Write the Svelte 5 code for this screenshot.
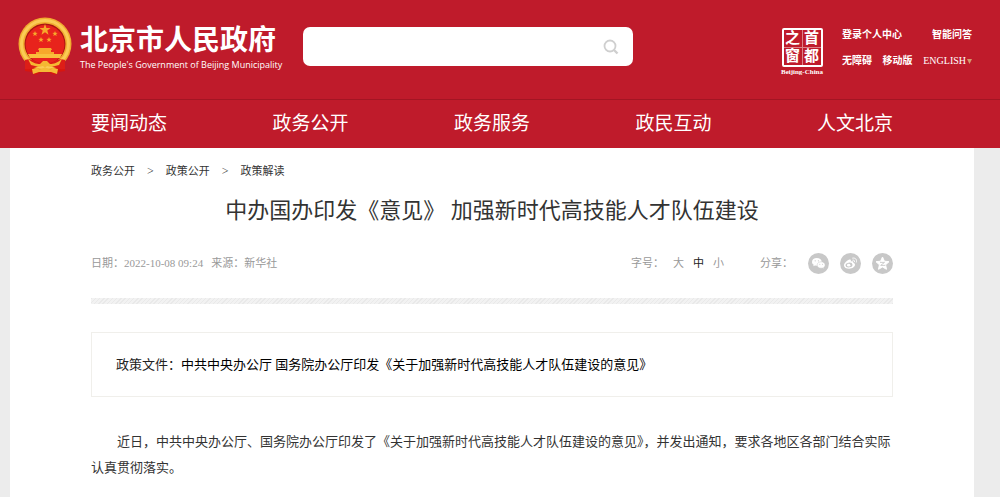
<script>
  const sections = ['要闻动态', '政务公开', '政务服务', '政民互动', '人文北京'];
  const crumbs = ['政务公开', '政策公开', '政策解读'];
  const sizes = ['大', '中', '小'];
  let size = $state('中');
  let query = $state('');
</script>

<svelte:head>
  <title>中办国办印发《意见》 加强新时代高技能人才队伍建设</title>
</svelte:head>

<header>
  <div class="top">
    <a class="brand" href="/">
      <svg class="emblem" viewBox="0 0 56 58" aria-hidden="true">
        <path d="M8 39 L8 54 L15 55 L18 58 L28 54 L38 58 L41 55 L48 54 L48 39 Z" fill="#d8160f" />
        <circle cx="28" cy="27" r="26.500" fill="#f0ad30" />
        <circle cx="28" cy="27" r="23.500" fill="none" stroke="#fbcb55" stroke-width="3" />
        <circle cx="28" cy="27" r="20.500" fill="#a91510" />
        <circle cx="28" cy="27.500" r="19.500" fill="#e8231c" />
        <g fill="#f7a82b">
          <path d="M28 7l1.400 4 4.200.1-3.300 2.500 1.200 4.100-3.500-2.400-3.500 2.400 1.200-4.100-3.300-2.500 4.200-.1z" />
          <path d="M18 14l.7 1.800 2 .1-1.600 1.200.6 1.900-1.700-1.100-1.700 1.100.6-1.900-1.600-1.200 2-.1z" />
          <path d="M38 14l.7 1.800 2 .1-1.600 1.200.6 1.900-1.700-1.100-1.700 1.100.6-1.900-1.600-1.200 2-.1z" />
          <path d="M24 20l.7 1.800 2 .1-1.600 1.200.6 1.900-1.700-1.100-1.700 1.100.6-1.900-1.600-1.200 2-.1z" />
          <path d="M32 20l.7 1.800 2 .1-1.600 1.200.6 1.900-1.700-1.100-1.700 1.100.6-1.900-1.600-1.200 2-.1z" />
          <path d="M22 31h12l1 2h-1v2h3v2H19v-2h3v-2h-1z" />
        </g>
        <path d="M11 37h34l-2 4H13z" fill="#f9bf3c" />
        <path d="M8 43c6-2 9 1 14 3l3-2h6l3 2c5-2 8-5 14-3v9c-5 1-9-1-14-3h-12c-5 2-9 4-14 3z" fill="#dd1e17" />
        <path d="M11 42c5 4 8 5 12 5l3-3h4l3 3c4 0 7-1 12-5l-3 6-8 2-4-1-2 2-2-2-4 1-8-2z" fill="#f5b832" />
        <path d="M16 57l-1-5 5-1 3 2 3-2h4l3 2 3-2 5 1-1 5-6-2H22z" fill="#f5ba36" />
      </svg>
      <span class="names">
        <strong>北京市人民政府</strong>
        <span class="en">The People's Government of Beijing Municipality</span>
      </span>
    </a>

    <form class="search" role="search" onsubmit={(e) => e.preventDefault()}>
      <input type="text" aria-label="搜索" bind:value={query} />
      <button type="submit" aria-label="搜索">
        <svg viewBox="0 0 16 16" fill="none" stroke="#cfcfcf" stroke-width="1.800">
          <circle cx="7" cy="7" r="5.500" />
          <path d="M11 11l3.500 3.500" stroke-width="2.400" />
        </svg>
      </button>
    </form>

    <a class="seal" href="/">
      <span class="stamp">
        <span>之</span><span>首</span>
        <span>窗</span><span>都</span>
      </span>
      <span class="caption">Beijing-China</span>
    </a>

    <div class="tools">
      <div class="row">
        <a href="/login">登录个人中心</a>
        <a href="/ask">智能问答</a>
      </div>
      <div class="row">
        <a href="/accessible">无障碍</a>
        <a href="/mobile">移动版</a>
        <a class="lang" href="/english">ENGLISH<svg viewBox="0 0 5 5" aria-hidden="true"><path d="M0 0h5L2.500 5z" fill="#d39a6c" /></svg></a>
      </div>
    </div>
  </div>

  <nav>
    {#each sections as section}
      <a href="/">{section}</a>
    {/each}
  </nav>
</header>

<main>
  <div class="crumbs">
    {#each crumbs as crumb, i}
      {#if i > 0}<span>&gt;</span>{/if}
      <a href="/">{crumb}</a>
    {/each}
  </div>

  <h1>中办国办印发《意见》 加强新时代高技能人才队伍建设</h1>

  <div class="meta">
    <span class="date">日期：2022-10-08 09:24</span>
    <span>来源：新华社</span>
    <div class="sizes">
      <span>字号：</span>
      {#each sizes as s}
        <button class:active={size === s} onclick={() => (size = s)}>{s}</button>
      {/each}
    </div>
    <div class="share">
      <span>分享：</span>
      <a href="/" aria-label="微信">
        <svg viewBox="0 0 21 21">
          <circle cx="10.500" cy="10.500" r="10.500" fill="#c8c8c8" />
          <path d="M8.800 5C6 5 4 6.700 4 8.900c0 1.200.7 2.200 1.700 2.900l-.4 1.500 1.700-.9 1.800.3c2.700 0 4.900-1.700 4.900-3.900S11.500 5 8.800 5z" fill="#fff" />
          <path d="M13.100 8.800c-2.300 0-4 1.400-4 3.200s1.700 3.200 4 3.200l1.400-.2 1.400.8-.3-1.300c.9-.6 1.500-1.500 1.500-2.500 0-1.800-1.700-3.200-4-3.200z" fill="#fff" stroke="#c8c8c8" stroke-width=".5" />
          <g fill="#c8c8c8"><circle cx="7.200" cy="7.800" r=".6" /><circle cx="10.400" cy="7.800" r=".6" /><circle cx="11.800" cy="11.300" r=".5" /><circle cx="14.500" cy="11.300" r=".5" /></g>
        </svg>
      </a>
      <a href="/" aria-label="微博">
        <svg viewBox="0 0 21 21">
          <circle cx="10.500" cy="10.500" r="10.500" fill="#c8c8c8" />
          <path d="M8.800 6.800c1.500-.6 2.500 0 2 1.700 1.600-.6 3-.2 2.500 1.300 1 .4 1.700 1 1.700 2 0 2-2.700 3.900-5.800 3.900-2.900 0-5.200-1.300-5.200-3.300 0-2 2.500-4.700 4.800-5.600z" fill="#fff" />
          <ellipse cx="9" cy="12" rx="3.500" ry="2.400" transform="rotate(-10 9 12)" fill="#c8c8c8" />
          <ellipse cx="8.700" cy="12.200" rx="1.700" ry="1.400" fill="#fff" />
          <path d="M12.700 5.100c2.700-.6 4.500 1.500 3.700 4M12.900 7.100c1.200-.2 1.900.5 1.600 1.600" fill="none" stroke="#fff" stroke-linecap="round" />
        </svg>
      </a>
      <a href="/" aria-label="QQ空间">
        <svg viewBox="0 0 21 21">
          <circle cx="10.500" cy="10.500" r="10.500" fill="#c8c8c8" />
          <path d="M10.500 4l1.900 4.200 4.600.5-3.400 3.100.9 4.500-4-2.300-4 2.300.9-4.500L4 8.700l4.600-.5z" fill="#fff" stroke="#fff" stroke-linejoin="round" />
          <path d="M8 9.400h4.500l-3.800 3h4.600" fill="none" stroke="#c8c8c8" stroke-width=".9" />
        </svg>
      </a>
    </div>
  </div>

  <div class="stripe"></div>

  <div class="source">政策文件：<a href="/">中共中央办公厅 国务院办公厅印发《关于加强新时代高技能人才队伍建设的意见》</a></div>

  <p>近日，中共中央办公厅、国务院办公厅印发了《关于加强新时代高技能人才队伍建设的意见》，并发出通知，要求各地区各部门结合实际认真贯彻落实。</p>
</main>

<style>
  :global(body) {
    margin: 0;
    background: #ececec;
    color: #333;
    font-family: "Liberation Serif", "Noto Sans CJK SC", serif;
  }
  a { color: inherit; text-decoration: none; }
  svg { display: block; }
  button { border: 0; padding: 0; background: none; color: inherit; font: inherit; cursor: pointer; }

  header { background: #bf1b2b; color: #fff; }
  .top {
    display: flex;
    align-items: flex-start;
    height: 100px;
    padding: 0 28px 0 17px;
    border-bottom: 1px solid #a31523;
    box-sizing: border-box;
  }
  .brand { display: flex; gap: 7px; padding-top: 17px; }
  .emblem { width: 56px; height: 58px; }
  .names { display: flex; flex-direction: column; width: 223px; white-space: nowrap; }
  .names strong { font: bold 28px/42px "Noto Sans CJK SC", sans-serif; }
  .en { font: 9px/12px "Open Sans", sans-serif; }

  .search {
    display: flex;
    align-items: center;
    flex: 0 1 330px;
    height: 39px;
    margin-top: 27px;
    border-radius: 7px;
    background: #fff;
  }
  .search input { flex: 1; min-width: 0; padding: 0 12px; border: 0; outline: 0; background: none; font: inherit; }
  .search svg { width: 16px; height: 16px; margin-right: 14px; }

  .seal { display: flex; flex-direction: column; align-items: center; width: 46px; margin: 28px 0 0 auto; }
  .stamp {
    display: grid;
    grid-template-columns: 18px 18px;
    gap: 1px;
    border: 2px solid #fff;
    border-radius: 2px;
    background: linear-gradient(#dd8088, #dd8088) center / 1px 100% no-repeat, linear-gradient(#dd8088, #dd8088) center / 100% 1px no-repeat;
    font-size: 15px;
    font-weight: 700;
    line-height: 17px;
    text-align: center;
  }
  .caption { font-size: 7px; line-height: 10px; font-weight: bold; white-space: nowrap; }

  .tools { width: 130px; margin: 22px 0 0 17px; font-size: 10px; font-weight: 700; line-height: 26px; white-space: nowrap; }
  .row { display: flex; justify-content: space-between; }
  .lang { display: flex; align-items: center; gap: 1px; font-weight: 400; }
  .lang svg { width: 5px; height: 5px; }

  nav {
    display: flex;
    justify-content: space-between;
    padding: 0 107px 0 91px;
    font-size: 19px;
    line-height: 48px;
  }

  main { min-height: 349px; margin: 0 26px 0 10px; padding: 0 81px; background: #fff; }
  .crumbs { display: flex; gap: 12px; padding-top: 14px; font-size: 11px; line-height: 18px; }
  .crumbs span { font-size: 12px; }
  h1 { margin: 13px 0 0; font-size: 22px; font-weight: 400; line-height: 36px; text-align: center; }

  .meta { display: flex; align-items: center; margin-top: 23px; color: #999; font-size: 11px; line-height: 22px; }
  .date { margin-right: 8px; }
  .sizes { display: flex; gap: 9px; margin-left: auto; }
  .sizes button.active { color: #222; }
  .share { display: flex; align-items: center; gap: 11px; margin-left: 36px; }
  .share span { margin-right: 4px; }
  .share svg { width: 21px; height: 21px; }

  .stripe {
    height: 6px;
    margin-top: 24px;
    background: repeating-linear-gradient(135deg, #e9e9e9 0 1px, #f2f2f2 1px 3px);
  }
  .source {
    margin-top: 28px;
    padding: 19px 24px;
    border: 1px solid #f0efeb;
    color: #222;
    font-size: 13px;
    line-height: 25px;
  }
  .source a { color: #000; }
  p { margin: 32px 0 0; font-size: 13px; line-height: 26px; text-indent: 2em; }
</style>
